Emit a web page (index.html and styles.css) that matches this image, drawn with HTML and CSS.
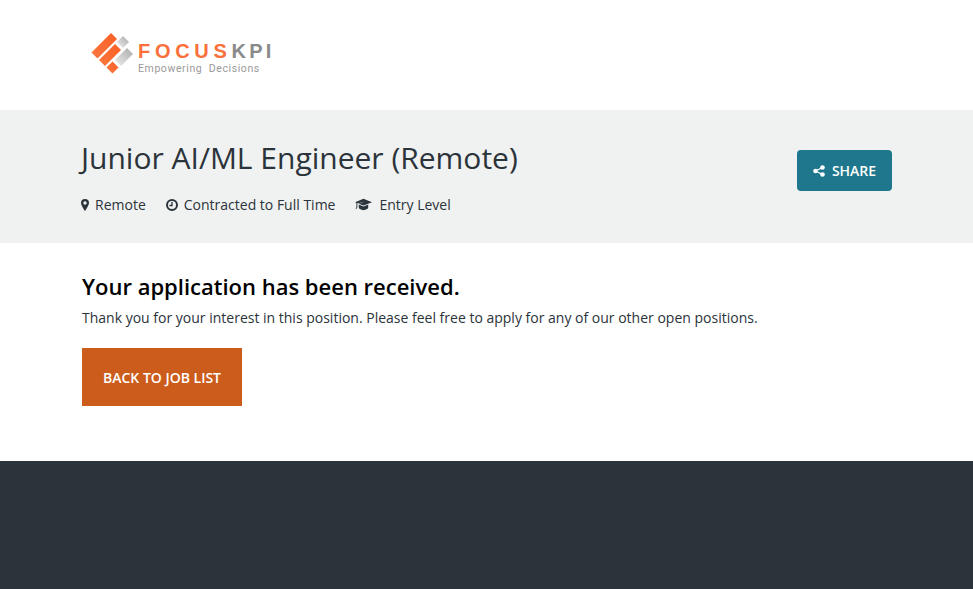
FILE: index.html
```html
<!DOCTYPE html>
<html lang="en">
<head>
<meta charset="utf-8">
<title>Junior AI/ML Engineer (Remote)</title>
<link rel="stylesheet" href="styles.css">
</head>
<body>
<header class="brand">
  <div class="logo">
    <svg class="logo-mark" viewBox="0 0 46 46" width="46" height="46" aria-hidden="true">
      <defs>
        <linearGradient id="org" x1="0" y1="1" x2="1" y2="0"><stop offset="0" stop-color="#f9773f"/><stop offset="1" stop-color="#fb5f24"/></linearGradient>
        <linearGradient id="gry" x1="0" y1="1" x2="1" y2="0"><stop offset="0" stop-color="#eeeeee"/><stop offset="1" stop-color="#a9a9a9"/></linearGradient>
      </defs>
      <polygon points="0.5,20.5 20,1 26,7 6.5,26.500" fill="url(#org)"/>
      <polygon points="8,28 24,12 30,18 14,34" fill="url(#org)"/>
      <polygon points="26,10 32,4 38,10 32,16" fill="url(#gry)"/>
      <polygon points="24,28 36,16 42,22 30,34" fill="url(#gry)"/>
      <polygon points="15.500,35.500 21.500,29.500 27.500,35.500 21.500,41.500" fill="url(#org)"/>
    </svg>
    <div class="logo-text">
      <div class="logo-name"><span class="logo-focus">FOCUS</span><span class="logo-kpi">KPI</span></div>
      <div class="logo-tag">Empowering&nbsp; Decisions</div>
    </div>
  </div>
</header>
<section class="job-band">
  <div class="job-info">
    <h1 class="job-title">Junior AI/ML Engineer (Remote)</h1>
    <ul class="job-meta">
      <li class="meta-item">
        <svg class="icon icon-pin" viewBox="0 0 8 12" aria-hidden="true"><path fill-rule="evenodd" d="M4 0a4 4 0 0 1 4 4c0 1.800-2.500 6-4 8C2.500 10 0 5.800 0 4a4 4 0 0 1 4-4zm0 2.300a1.700 1.700 0 1 0 0 3.400 1.700 1.700 0 0 0 0-3.400z"/></svg>
        Remote
      </li>
      <li class="meta-item">
        <svg class="icon icon-clock" viewBox="0 0 12 12" aria-hidden="true"><circle cx="6" cy="6" r="5" fill="none" stroke="currentColor" stroke-width="2"/><path d="M6 3v3.500H3.500" fill="none" stroke="currentColor" stroke-width="1.300"/></svg>
        Contracted to Full Time
      </li>
      <li class="meta-item">
        <svg class="icon icon-cap" viewBox="0 0 18 13" aria-hidden="true"><path d="M9 0.500 18 4 9 7.500 3.500 5.400 9 4.500V4L2.500 5.200V9.500L1.800 11H.6L1.500 9.500V4.700L0 4z"/><path d="M4 6.600 9 8.600l5-2v3.200c0 1.500-2.500 2.700-5 2.700S4 11.300 4 9.800z"/></svg>
        Entry Level
      </li>
    </ul>
  </div>
  <a class="share-btn" href="#">
    <svg class="icon-share" viewBox="0 0 12 12" aria-hidden="true"><circle cx="2.500" cy="6" r="2.300"/><circle cx="9.500" cy="2.500" r="2.300"/><circle cx="9.500" cy="9.500" r="2.300"/><path d="M2.500 6 9.500 2.500M2.500 6l7 3.500" stroke="currentColor" stroke-width="1.300"/></svg>
    SHARE
  </a>
</section>
<main class="confirm">
  <h2 class="confirm-title">Your application has been received.</h2>
  <p class="confirm-text">Thank you for your interest in this position. Please feel free to apply for any of our other open positions.</p>
  <a class="back-btn" href="#">BACK TO JOB LIST</a>
</main>
<footer class="site-footer"></footer>
</body>
</html>
```
FILE: styles.css
```css
* { box-sizing: border-box; }
html, body { margin: 0; height: 100%; }
body {
  display: flex;
  flex-direction: column;
  background: #fff;
  color: #2b333b;
  font-family: "Open Sans", sans-serif;
  overflow: hidden;
}
.brand { height: 110px; padding: 32px 0 0 91px; }
.logo { display: flex; align-items: flex-start; gap: 1px; }
.logo-mark { display: block; flex: none; }
.logo-text { padding-top: 9px; }
.logo-name { font: 700 20px/20px "Liberation Sans", sans-serif; letter-spacing: 4.700px; white-space: nowrap; }
.logo-focus { color: #f9703a; }
.logo-kpi { color: #8a8a8a; letter-spacing: 3.200px; }
.logo-tag { font: 400 10.500px/12px "Roboto", sans-serif; letter-spacing: .6px; color: #9a9a9a; margin-top: 2px; white-space: nowrap; }
.job-band {
  height: 133px;
  background: #f0f2f1;
  padding: 0 81px;
  display: flex;
  justify-content: space-between;
  align-items: flex-start;
}
.job-title { margin: 27px 0 0; font-size: 30px; line-height: 41px; font-weight: 400; color: #2b333b; }
.job-meta { list-style: none; margin: 17px 0 0; padding: 0; display: flex; gap: 20px; font-size: 14px; line-height: 19px; }
.meta-item { display: flex; align-items: center; gap: 6px; }
.icon { display: block; fill: currentColor; flex: none; }
.icon-pin { width: 8px; height: 12px; }
.icon-clock { width: 12px; height: 12px; }
.icon-cap { width: 17px; height: 13px; margin-right: 1px; }
.share-btn {
  margin-top: 40px;
  width: 95px;
  height: 41px;
  background: #1e778c;
  border-radius: 4px;
  color: #fff;
  display: flex;
  align-items: center;
  justify-content: center;
  gap: 7px;
  font-size: 14px;
  font-weight: 600;
  text-decoration: none;
}
.icon-share { width: 12px; height: 12px; fill: currentColor; color: #fff; }
.confirm { flex: 1; padding: 27px 82px 0; }
.confirm-title { margin: 0; font-size: 22px; line-height: 32px; font-weight: 600; color: #000; }
.confirm-text { margin: 6px 0 0; font-size: 14px; line-height: 19px; }
.back-btn {
  display: flex;
  align-items: center;
  justify-content: center;
  margin-top: 21px;
  width: 160px;
  height: 58px;
  background: #cb5c1b;
  color: #fff;
  font-size: 14px;
  font-weight: 600;
  text-decoration: none;
}
.site-footer { height: 128px; background: #2b333b; flex: none; }
```
